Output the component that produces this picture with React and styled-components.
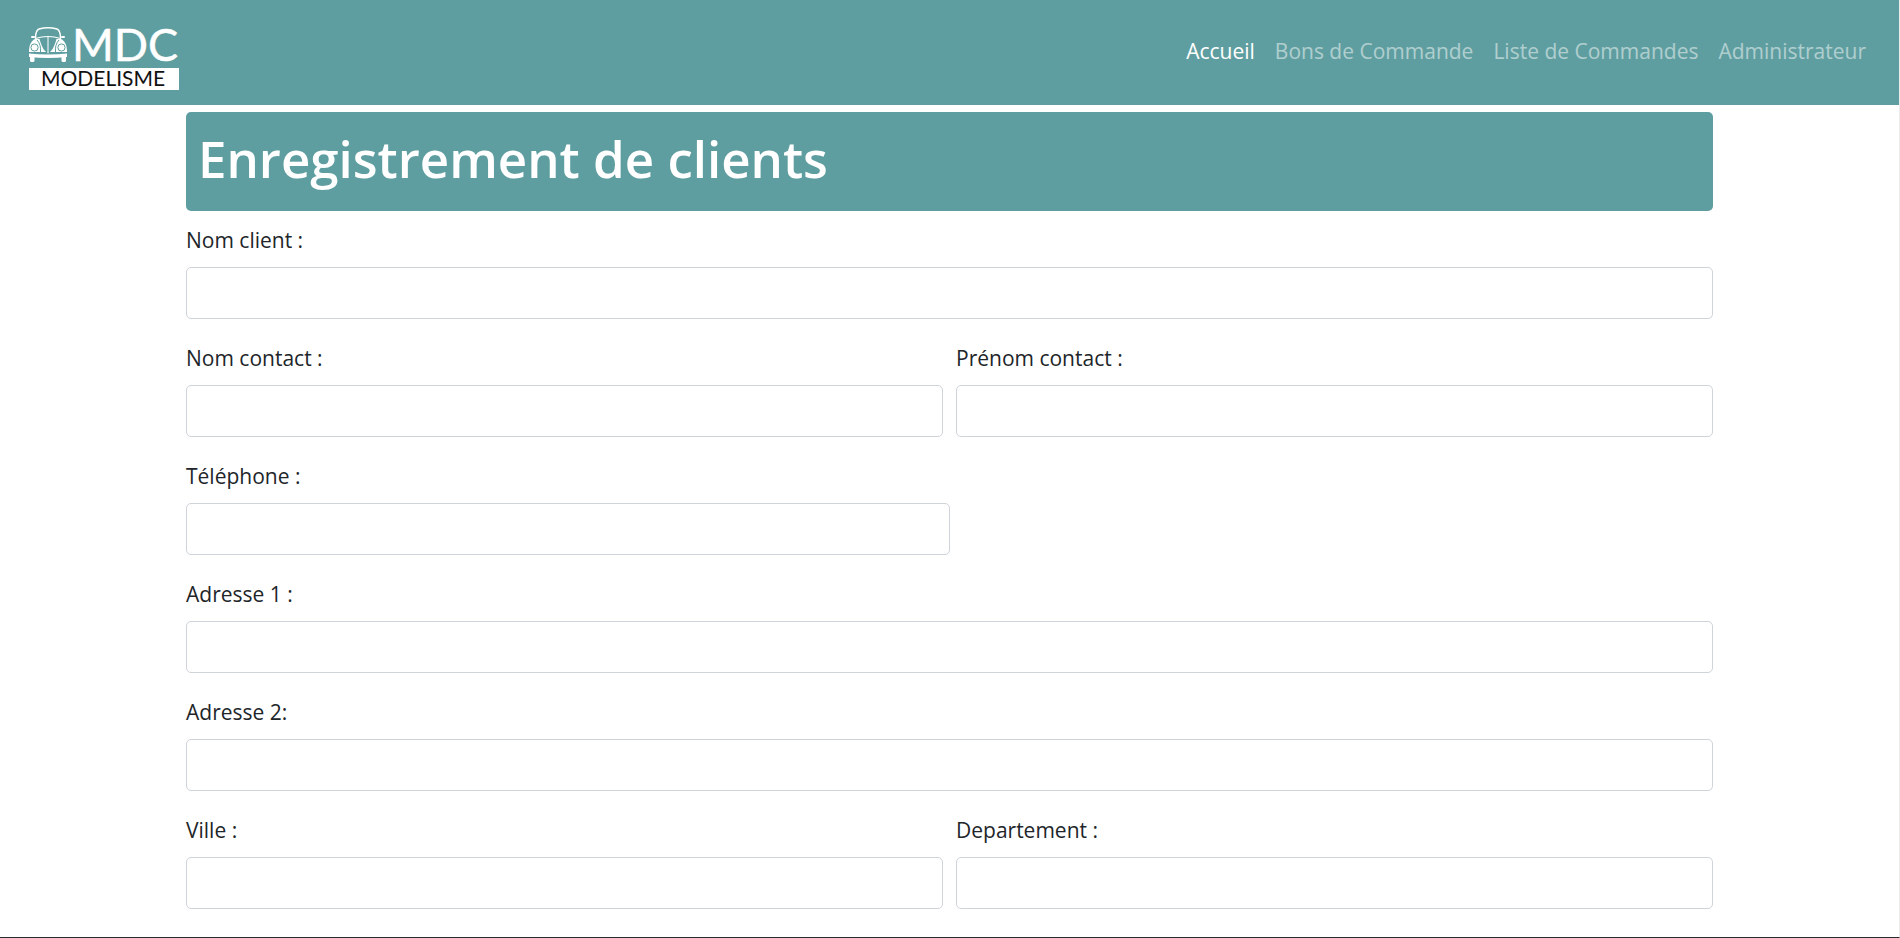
import React from "react";
import styled, { createGlobalStyle } from "styled-components";

const teal = "#5f9ea0";

const GlobalStyle = createGlobalStyle`
  *, *::before, *::after { box-sizing: border-box; }
  body {
    margin: 0;
    background: #fff;
    color: #212529;
    font-family: "Open Sans", "Noto Sans", sans-serif;
    font-size: 21px;
    line-height: 32px;
  }
`;

const Page = styled.div`
  display: flex;
  flex-direction: column;
  min-height: 100vh;
  border-right: 1px solid #ececec;
  border-bottom: 1px solid #2b2a2c;
`;

const Navbar = styled.header`
  display: flex;
  justify-content: space-between;
  align-items: flex-start;
  padding: 10px 23px 14px 28px;
  background: ${teal};
`;

const Brand = styled.a`
  display: block;
  height: 81px;
`;

const NavLinks = styled.nav`
  display: flex;
  padding-top: 25px;
`;

const NavLink = styled.a`
  padding: 0 10px;
  color: ${(p) => (p.$active ? "#fff" : "rgba(255, 255, 255, 0.5)")};
  text-decoration: none;
`;

const Container = styled.main`
  width: 100%;
  max-width: 1527px;
  margin: 7px auto 26px;
`;

const Title = styled.h1`
  margin: 0 0 13px;
  padding: 10px 12px 17px;
  border-radius: 5px;
  background: ${teal};
  color: #fff;
  font-size: 51px;
  font-weight: 600;
  line-height: 72px;
`;

const Form = styled.form`
  display: flex;
  flex-direction: column;
  gap: 23px;
`;

const Row = styled.div`
  display: flex;
  gap: 13px;
`;

const Field = styled.div`
  display: flex;
  flex-direction: column;
  gap: 11px;
  flex: ${(p) => (p.$half ? "0 0 50%" : "1 1 0")};
`;

const Input = styled.input`
  width: 100%;
  height: 52px;
  padding: 8px 16px;
  border: 1px solid #ced4da;
  border-radius: 5px;
  background: #fff;
  color: #495057;
  font: inherit;
`;

function Logo() {
  return (
    <svg width="152" height="81" viewBox="0 -14 152 81" role="img" aria-label="MDC Modelisme">
      <g fill="none" stroke="#fff" strokeLinecap="round">
        <path strokeWidth="1.5" d="M7.5 14 C7.5 9 9 5.8 11 5 C16 3.5 24 3.5 29 5 C31 5.8 32.5 9 32.5 14" />
        <path strokeWidth="1.2" d="M7.5 14.5 Q20 10.5 32.5 14.5" />
        <path strokeWidth="1" d="M20 13 V29" />
        <path strokeWidth="2" d="M4 13 H6 M34 13 H36" />
      </g>
      <g fill="#fff">
        <path d="M7 15 C3 17 1 21 1 28 H18 C14.500 25 13 20 11.500 15 Z" />
        <path d="M33 15 C37 17 39 21 39 28 H22 C25.500 25 27 20 28.500 15 Z" />
        <path d="M1 29.500 Q20 31.500 39 29.500 V33 Q20 35 1 33 Z" />
        <rect x="2" y="31" width="4.5" height="7" rx="1.5" />
        <rect x="33.5" y="31" width="4.5" height="7" rx="1.5" />
        <rect x="1" y="44" width="150" height="22" />
      </g>
      <g fill="none" stroke={teal} strokeWidth="1">
        <circle cx="6.5" cy="23.500" r="3.6" />
        <circle cx="33.5" cy="23.500" r="3.6" />
        <path d="M9 16 C12 19 13 24 12.500 28 M31 16 C28 19 27 24 27.500 28" />
      </g>
      <text x="44" y="37" fill="#fff" stroke="#fff" strokeWidth="0.5" fontFamily="Lato, sans-serif" fontSize="45">MDC</text>
      <text x="13" y="62" fill="#111" fontFamily="Lato, sans-serif" fontSize="21">MODELISME</text>
    </svg>
  );
}

const links = ["Accueil", "Bons de Commande", "Liste de Commandes", "Administrateur"];

const rows = [
  [{ id: "nom-client", label: "Nom client :" }],
  [
    { id: "nom-contact", label: "Nom contact :" },
    { id: "prenom-contact", label: "Prénom contact :" },
  ],
  [{ id: "telephone", label: "Téléphone :", type: "tel", half: true }],
  [{ id: "adresse-1", label: "Adresse 1 :" }],
  [{ id: "adresse-2", label: "Adresse 2:" }],
  [
    { id: "ville", label: "Ville :" },
    { id: "departement", label: "Departement :" },
  ],
];

export default function App() {
  return (
    <>
      <GlobalStyle />
      <Page>
        <Navbar>
          <Brand href="#">
            <Logo />
          </Brand>
          <NavLinks>
            {links.map((text, i) => (
              <NavLink key={text} href="#" $active={i === 0}>
                {text}
              </NavLink>
            ))}
          </NavLinks>
        </Navbar>
        <Container>
          <Title>Enregistrement de clients</Title>
          <Form>
            {rows.map((fields) => (
              <Row key={fields[0].id}>
                {fields.map((f) => (
                  <Field key={f.id} $half={f.half}>
                    <label htmlFor={f.id}>{f.label}</label>
                    <Input id={f.id} name={f.id} type={f.type || "text"} />
                  </Field>
                ))}
              </Row>
            ))}
          </Form>
        </Container>
      </Page>
    </>
  );
}
